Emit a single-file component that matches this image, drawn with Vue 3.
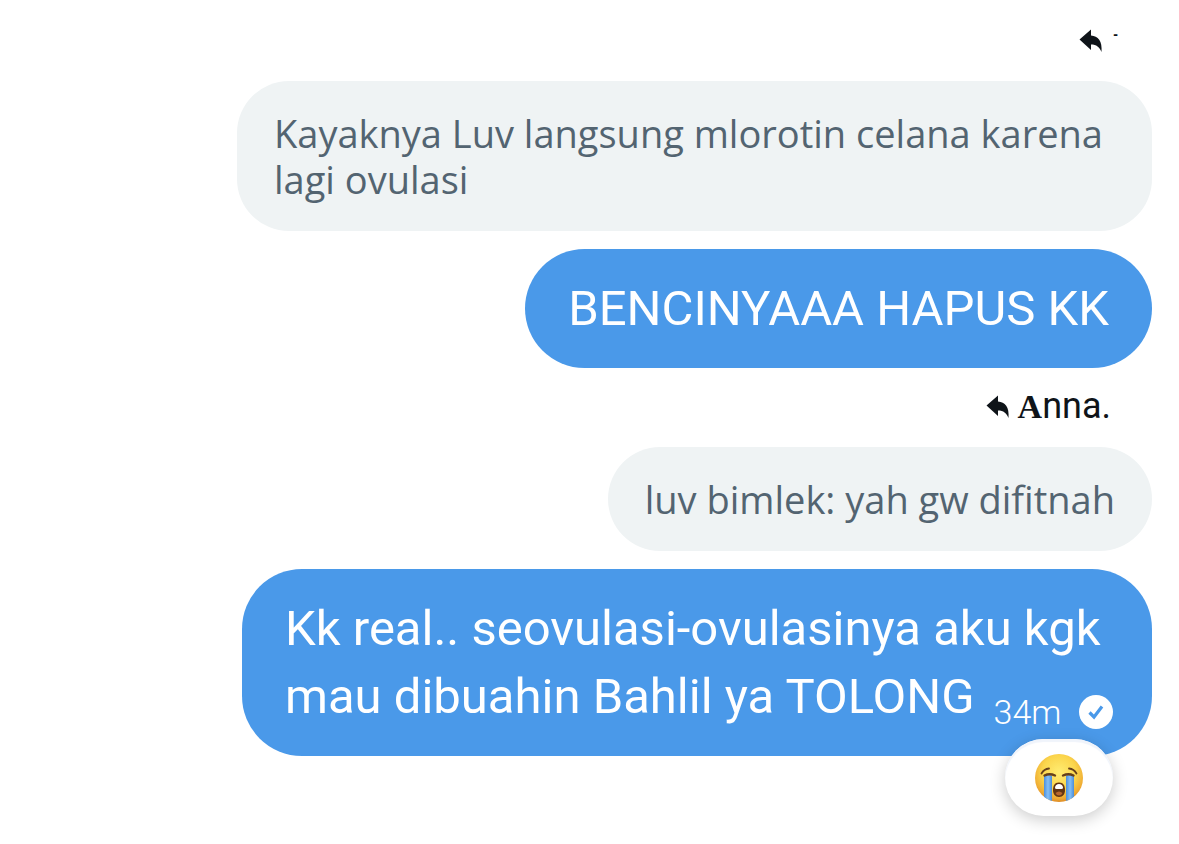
<script setup>
const thread = [
  { id: 1, replyLead: '', replyName: '-', faint: true, quote: 'Kayaknya Luv langsung mlorotin celana karena lagi ovulasi', text: 'BENCINYAAA HAPUS KK' },
  { id: 2, replyLead: 'A', replyName: 'nna.', quote: 'luv bimlek: yah gw difitnah', text: 'Kk real.. seovulasi-ovulasinya aku kgk mau dibuahin Bahlil ya TOLONG', time: '34m', reaction: true },
]
</script>

<template>
  <main class="chat">
    <article v-for="m in thread" :key="m.id" class="message">
      <header class="reply" :class="{ faint: m.faint }">
        <svg class="arrow" viewBox="0 0 24 24" aria-hidden="true">
          <path d="M.5 10.500 12 .5v6C19 7 23.500 12 22.500 23c-2-5-5-7.500-10.500-7.500v5.500Z" />
        </svg>
        <span class="name"><b v-if="m.replyLead">{{ m.replyLead }}</b>{{ m.replyName }}</span>
      </header>
      <p class="quote">{{ m.quote }}</p>
      <div class="bubble">
        <p class="text">
          <span>{{ m.text }}</span>
          <span v-if="m.time" class="meta">
            <time>{{ m.time }}</time>
            <svg class="sent" viewBox="0 0 34 34" role="img" aria-label="Sent">
              <circle cx="17" cy="17" r="17" fill="#fff" />
              <path d="m10.500 17.500 4.500 4.500 8-10.500" fill="none" stroke="#4a99e9" stroke-width="3.200" />
            </svg>
          </span>
        </p>
        <button v-if="m.reaction" class="reaction" type="button" aria-label="Loudly crying reaction">
          <svg viewBox="0 0 48 48" aria-hidden="true">
            <defs>
              <radialGradient id="face" cx=".5" cy=".38" r=".64">
                <stop offset="0" stop-color="#ffed72" />
                <stop offset=".55" stop-color="#fbd54c" />
                <stop offset=".85" stop-color="#efaa32" />
                <stop offset="1" stop-color="#d98524" />
              </radialGradient>
              <linearGradient id="tear" x1="0" x2="1" y1="0" y2="0">
                <stop offset="0" stop-color="#4c8fdc" />
                <stop offset=".5" stop-color="#84bff5" />
                <stop offset="1" stop-color="#4b8dd8" />
              </linearGradient>
              <clipPath id="round"><circle cx="24" cy="24" r="24" /></clipPath>
            </defs>
            <circle cx="24" cy="24" r="24" fill="url(#face)" />
            <g clip-path="url(#round)">
              <path d="M9 22q4-3 8 0v26H9Z" fill="url(#tear)" />
              <path d="M31 22q4-3 8 0v26h-8Z" fill="url(#tear)" />
            </g>
            <g fill="none" stroke="#66401b" stroke-linecap="round">
              <path d="M6.500 19.500Q9 15 14 14.500M41.500 19.500Q39 15 34 14.500" stroke-width="1.800" />
              <path d="M9.500 21.500q5-2.500 10.500 0M28 21.500q5.500-2.500 10.500 0" stroke-width="2.400" />
            </g>
            <path d="M24 28.500c4.500 0 6 3.500 6 7.500S28 43 24 43 18 40 18 36 19.500 28.500 24 28.500Z" fill="#633512" />
            <path d="M20 33.500q.5-3.500 4-3.500t4 3.500q0 1.500-1.500 1.500h-5Q20 35 20 33.500Z" fill="#fff" />
            <path d="M20.500 39q3.500-3 7 0-1 2.500-3.500 2.500T20.500 39Z" fill="#b8672d" />
          </svg>
        </button>
      </div>
    </article>
  </main>
</template>

<style>
body { background: #fff; }
</style>

<style scoped>
.chat {
  display: flex;
  flex-direction: column;
  padding: 0 27px 87px;
  font-family: Roboto, "Noto Sans", sans-serif;
}
.message {
  display: flex;
  flex-direction: column;
  align-items: flex-end;
}
.reply {
  display: flex;
  align-items: center;
  gap: 8px;
  margin: 12px 41px 14px 0;
  color: #0f1419;
  font-size: 36px;
  line-height: 52px;
}
.faint {
  gap: 10px;
  margin: 14px 34px 14px 0;
}
.arrow { width: 24px; height: 24px; fill: currentColor; }
.name b { font-family: "Liberation Serif", serif; font-size: 34px; }
.faint .name {
  padding-bottom: 12px;
  font: bold 14px/41px "Liberation Sans", sans-serif;
}
.quote {
  box-sizing: border-box;
  max-width: 915px;
  margin: 0 0 18px;
  padding: 29px 37px;
  border-radius: 52px;
  background: #eff3f4;
  color: #536471;
  font-family: "Open Sans", "Noto Sans", sans-serif;
  font-size: 38px;
  line-height: 46px;
}
.bubble {
  position: relative;
  box-sizing: border-box;
  max-width: 910px;
  padding: 26px 43px 25px;
  border-radius: 60px;
  background: #4a99e9;
  color: #fff;
}
.text {
  margin: 0;
  font-size: 49px;
  line-height: 68px;
}
.meta {
  display: inline-flex;
  align-items: center;
  gap: 18px;
  margin: 0 -12px -12px 19px;
  vertical-align: -11px;
  font-size: 34px;
  font-weight: 300;
  line-height: 44px;
}
.sent { width: 34px; height: 34px; }
.reaction {
  position: absolute;
  right: 39px;
  bottom: -60px;
  display: grid;
  place-items: center;
  width: 108px;
  height: 77px;
  padding: 0;
  border: 0;
  border-radius: 39px;
  background: #fff;
  box-shadow: 0 4px 16px rgb(0 0 0 / 20%), inset 0 3px 1px #f0f4fb;
}
.reaction svg { width: 48px; height: 48px; }
</style>
